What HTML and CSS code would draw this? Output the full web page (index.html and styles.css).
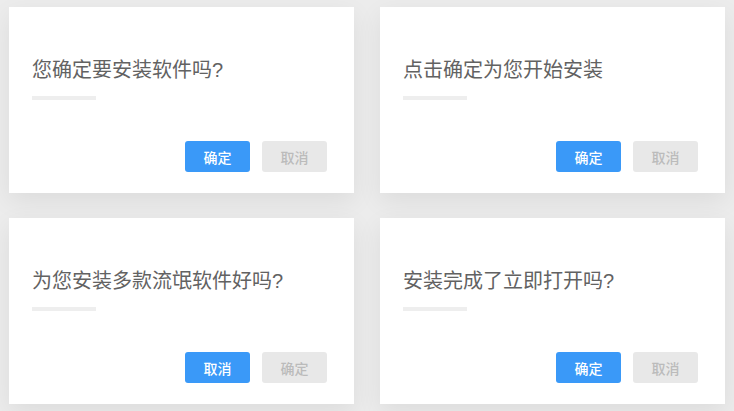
FILE: index.html
```html
<!DOCTYPE html>
<html lang="zh-CN">
<head>
    <meta charset="UTF-8">
    <meta name="viewport" content="width=device-width, initial-scale=1.0">
    <title>安装确认</title>
    <link rel="stylesheet" href="styles.css">
</head>
<body>

<div class="grid">
    <!-- 卡片 1 -->
    <div class="card">
        <div class="title">您确定要安装软件吗?</div>
        <div class="line"></div>
        <div class="actions">
            <button class="btn primary">确定</button>
            <button class="btn disabled">取消</button>
        </div>
    </div>

    <!-- 卡片 2 -->
    <div class="card">
        <div class="title">点击确定为您开始安装</div>
        <div class="line"></div>
        <div class="actions">
            <button class="btn primary">确定</button>
            <button class="btn disabled">取消</button>
        </div>
    </div>

    <!-- 卡片 3 -->
    <div class="card">
        <div class="title">为您安装多款流氓软件好吗?</div>
        <div class="line"></div>
        <div class="actions">
            <button class="btn primary">取消</button>
            <button class="btn disabled">确定</button>
        </div>
    </div>

    <!-- 卡片 4 -->
    <div class="card">
        <div class="title">安装完成了立即打开吗?</div>
        <div class="line"></div>
        <div class="actions">
            <button class="btn primary">确定</button>
            <button class="btn disabled">取消</button>
        </div>
    </div>
</div>

</body>
</html>
```

FILE: styles.css
```css
body {
    margin: 0;
    background-color: #ececec;
    font-family: "Noto Sans CJK SC", "Noto Sans", sans-serif;
}
.grid {
    display: grid;
    grid-template-columns: 345px 345px;
    column-gap: 26px;
    row-gap: 25px;
    padding: 7px 9px;
}
.card {
    background-color: #FFFFFF;
    box-shadow: 0 8px 24px rgba(0, 0, 0, 0.07);
    padding: 49px 27px 21px 23px;
    height: 186px;
    box-sizing: border-box;
}
.title {
    font-family: "Liberation Sans", "Noto Sans CJK SC", sans-serif;
    font-size: 20px;
    line-height: 28px;
    color: #626262;
}
.line {
    width: 64px;
    height: 4px;
    margin-top: 12px;
    background-color: #eeeeee;
}
.actions {
    display: flex;
    justify-content: flex-end;
    gap: 12px;
    margin-top: 41px;
}
.btn {
    width: 65px;
    height: 31px;
    padding: 0;
    border: none;
    border-radius: 3px;
    font-family: inherit;
    font-size: 14px;
    font-weight: 500;
    cursor: pointer;
}
.primary {
    background-color: #3a99f8;
    color: #FFFFFF;
}
.disabled {
    background-color: #e8e8e8;
    color: #bbbbbb;
}
```
